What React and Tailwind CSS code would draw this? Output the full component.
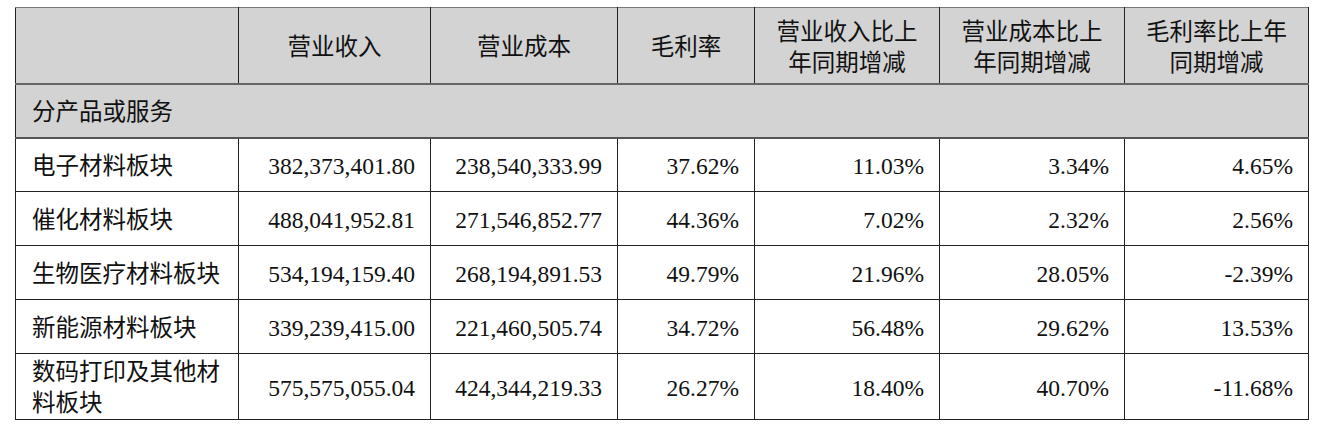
export default function App() {
  const rows = [
    ["电子材料板块", "382,373,401.80", "238,540,333.99", "37.62%", "11.03%", "3.34%", "4.65%"],
    ["催化材料板块", "488,041,952.81", "271,546,852.77", "44.36%", "7.02%", "2.32%", "2.56%"],
    ["生物医疗材料板块", "534,194,159.40", "268,194,891.53", "49.79%", "21.96%", "28.05%", "-2.39%"],
    ["新能源材料板块", "339,239,415.00", "221,460,505.74", "34.72%", "56.48%", "29.62%", "13.53%"],
    ["数码打印及其他材料板块", "575,575,055.04", "424,344,219.33", "26.27%", "18.40%", "40.70%", "-11.68%"],
  ];
  const font = { fontFamily: '"Liberation Serif", "Noto Sans CJK SC", serif' };
  const th = "border border-[#222] border-t-[#777] border-b-2 border-b-[#666] font-normal pt-[5px]";
  return (
    <div className="w-[1319px] h-[428px] bg-white pt-[7px] pl-[15px]" style={font}>
      <table className="table-fixed border-collapse text-[23.5px] leading-[31px] text-[#111]">
        <colgroup>
          <col className="w-[223px]" />
          <col className="w-[192px]" />
          <col className="w-[187px]" />
          <col className="w-[137px]" />
          <col className="w-[185px]" />
          <col className="w-[185px]" />
          <col className="w-[184px]" />
        </colgroup>
        <thead>
          <tr className="h-[76px] bg-[#d3d3d3]">
            <th className={th}></th>
            <th className={th}>营业收入</th>
            <th className={th}>营业成本</th>
            <th className={th}>毛利率</th>
            <th className={th + " px-[14px]"}>营业收入比上年同期增减</th>
            <th className={th + " px-[14px]"}>营业成本比上年同期增减</th>
            <th className={th + " px-[14px]"}>毛利率比上年同期增减</th>
          </tr>
        </thead>
        <tbody>
          <tr className="h-[54px] bg-[#d3d3d3]">
            <td colSpan={7} className="border border-[#222] border-b-2 border-b-[#555] pl-[16px] pt-[3px]">分产品或服务</td>
          </tr>
          {rows.map((r, i) => (
            <tr key={i} className={i === rows.length - 1 ? "h-[65px]" : "h-[54px]"}>
              <td className="border border-[#222] pl-[16px] pr-[6px] pt-[3px] text-left">{r[0]}</td>
              {r.slice(1).map((v, j) => (
                <td key={j} className="border border-[#222] pr-[15px] pt-[3px] text-right">{v}</td>
              ))}
            </tr>
          ))}
        </tbody>
      </table>
    </div>
  );
}
